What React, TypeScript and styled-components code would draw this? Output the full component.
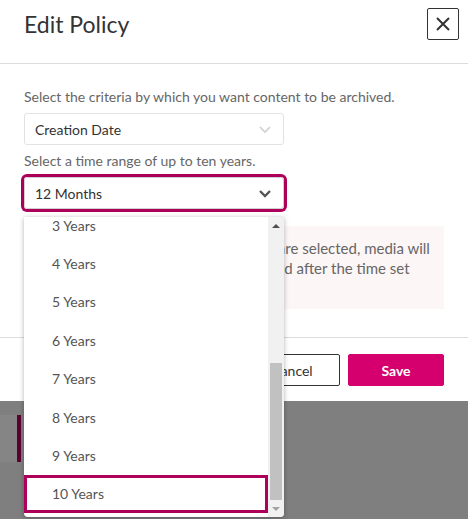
import React from "react";
import styled, { createGlobalStyle } from "styled-components";

const GlobalStyle = createGlobalStyle`
	body {
		margin: 0;
		background: #7f7f7f;
		font-family: "Lato", "Liberation Sans", sans-serif;
	}
`;

const Page = styled.div`
	display: flex;
	flex-direction: column;
	min-height: 100vh;
`;

const Modal = styled.div`
	width: 468px;
	background: #fff;
`;

const Header = styled.div`
	display: flex;
	align-items: center;
	justify-content: space-between;
	padding: 8px 9px 23px 24px;
	border-bottom: 1px solid #dcdcdc;
`;

const Title = styled.h1`
	margin: 0;
	font-size: 23px;
	font-weight: 400;
	color: #333;
`;

const CloseButton = styled.button`
	display: flex;
	align-items: center;
	justify-content: center;
	width: 32px;
	height: 32px;
	padding: 0;
	border: 1px solid #333;
	border-radius: 2px;
	background: #fff;
`;

const Body = styled.div`
	position: relative;
	display: flex;
	flex-direction: column;
	padding: 23px 24px 28px;
`;

const Label = styled.div`
	font-size: 14px;
	line-height: 20px;
	color: #666;
	margin-bottom: 6px;
`;

const Select = styled.div<{ $focused?: boolean }>`
	display: flex;
	align-items: center;
	justify-content: space-between;
	box-sizing: border-box;
	width: 260px;
	height: 32px;
	padding: 0 11px 0 10px;
	border: 1px solid ${(p) => (p.$focused ? "#d0d0d0" : "#e2e2e2")};
	border-radius: 3px;
	font-size: 14px;
	color: #333;
	margin-bottom: 6px;
	box-shadow: ${(p) => (p.$focused ? "0 0 0 3px #ad005b" : "none")};
`;

const Info = styled.div`
	margin-top: 11px;
	padding: 12px 14px 11px 12px;
	background: #fdf6f6;
	font-size: 15px;
	line-height: 20px;
	color: #666;
	white-space: nowrap;
	overflow: hidden;
`;

const Footer = styled.div`
	display: flex;
	justify-content: flex-end;
	gap: 8px;
	padding: 16px 24px 15px;
	border-top: 1px solid #dcdcdc;
`;

const Button = styled.button<{ $primary?: boolean }>`
	width: 96px;
	height: 32px;
	border-radius: 2px;
	font-family: inherit;
	font-size: 14px;
	font-weight: ${(p) => (p.$primary ? 700 : 400)};
	color: ${(p) => (p.$primary ? "#fff" : "#333")};
	background: ${(p) => (p.$primary ? "#d5006d" : "#fff")};
	border: 1px solid ${(p) => (p.$primary ? "#d5006d" : "#333")};
`;

// open option list of the focused select, hanging over the info box and footer
const Dropdown = styled.div`
	position: absolute;
	left: 24px;
	top: 153px;
	width: 260px;
	height: 300px;
	display: flex;
	background: #fff;
	border-radius: 0 0 4px 4px;
	box-shadow: 0 1px 5px rgba(0, 0, 0, 0.3);
	overflow: hidden;
	z-index: 2;
`;

const OptionList = styled.div`
	flex: 1;
	display: flex;
	flex-direction: column;
	justify-content: flex-end;
	padding-bottom: 4px;
	overflow: hidden;
`;

const Option = styled.div<{ $selected?: boolean }>`
	flex: none;
	display: flex;
	align-items: center;
	height: 38.4px;
	padding-left: 28px;
	font-size: 14px;
	color: #555;
	box-shadow: ${(p) => (p.$selected ? "inset 0 0 0 3px #ad005b" : "none")};
`;

const Scrollbar = styled.div`
	display: flex;
	flex-direction: column;
	align-items: center;
	width: 16px;
	background: #f1f1f1;
`;

const ScrollArrow = styled.div<{ $down?: boolean }>`
	display: flex;
	align-items: center;
	justify-content: center;
	height: 17px;
	width: 100%;
	&::after {
		content: "";
		border-left: 4px solid transparent;
		border-right: 4px solid transparent;
		${(p) =>
			p.$down ? "border-top: 4px solid #a3a3a3;" : "border-bottom: 4px solid #505050;"}
	}
`;

const Track = styled.div`
	flex: 1;
	display: flex;
	flex-direction: column;
	justify-content: flex-end;
	width: 100%;
	padding: 0 2px;
	box-sizing: border-box;
`;

const Thumb = styled.div`
	height: 137px;
	background: #c1c1c1;
`;

const Backdrop = styled.div`
	flex: 1;
	padding-top: 14px;
`;

const NavItem = styled.div`
	width: 17px;
	height: 47px;
	background: #858585;
	border-right: 4px solid #5c0030;
`;

const Chevron = ({ color, weight }: { color: string; weight: number }) => (
	<svg width="14" height="10" viewBox="0 0 14 10">
		<polyline points="2,3 7,8 12,3" fill="none" stroke={color} strokeWidth={weight} />
	</svg>
);

const options = [
	"1 Month",
	"3 Months",
	"6 Months",
	"12 Months",
	"2 Years",
	"3 Years",
	"4 Years",
	"5 Years",
	"6 Years",
	"7 Years",
	"8 Years",
	"9 Years",
	"10 Years",
];

const App = () => {
	return (
		<Page>
			<GlobalStyle />
			<Modal>
				<Header>
					<Title>Edit Policy</Title>
					<CloseButton aria-label="Close">
						<svg width="16" height="16" viewBox="0 0 16 16">
							<path d="M2 2 L14 14 M14 2 L2 14" stroke="#333" strokeWidth="2" />
						</svg>
					</CloseButton>
				</Header>
				<Body>
					<Label>Select the criteria by which you want content to be archived.</Label>
					<Select>
						Creation Date
						<Chevron color="#cfcfcf" weight={1.6} />
					</Select>
					<Label>Select a time range of up to ten years.</Label>
					<Select $focused>
						12 Months
						<Chevron color="#555" weight={2.4} />
					</Select>
					<Info>
						Once the criteria and the time range are selected, media will
						<br />
						be moved to archive and then removed after the time set
						<br />
						has passed.
					</Info>
					<Dropdown>
						<OptionList>
							{options.map((o) => (
								<Option key={o} $selected={o === "10 Years"}>
									{o}
								</Option>
							))}
						</OptionList>
						<Scrollbar>
							<ScrollArrow />
							<Track>
								<Thumb />
							</Track>
							<ScrollArrow $down />
						</Scrollbar>
					</Dropdown>
				</Body>
				<Footer>
					<Button>Cancel</Button>
					<Button $primary>Save</Button>
				</Footer>
			</Modal>
			<Backdrop>
				<NavItem />
			</Backdrop>
		</Page>
	);
};

export default App;
